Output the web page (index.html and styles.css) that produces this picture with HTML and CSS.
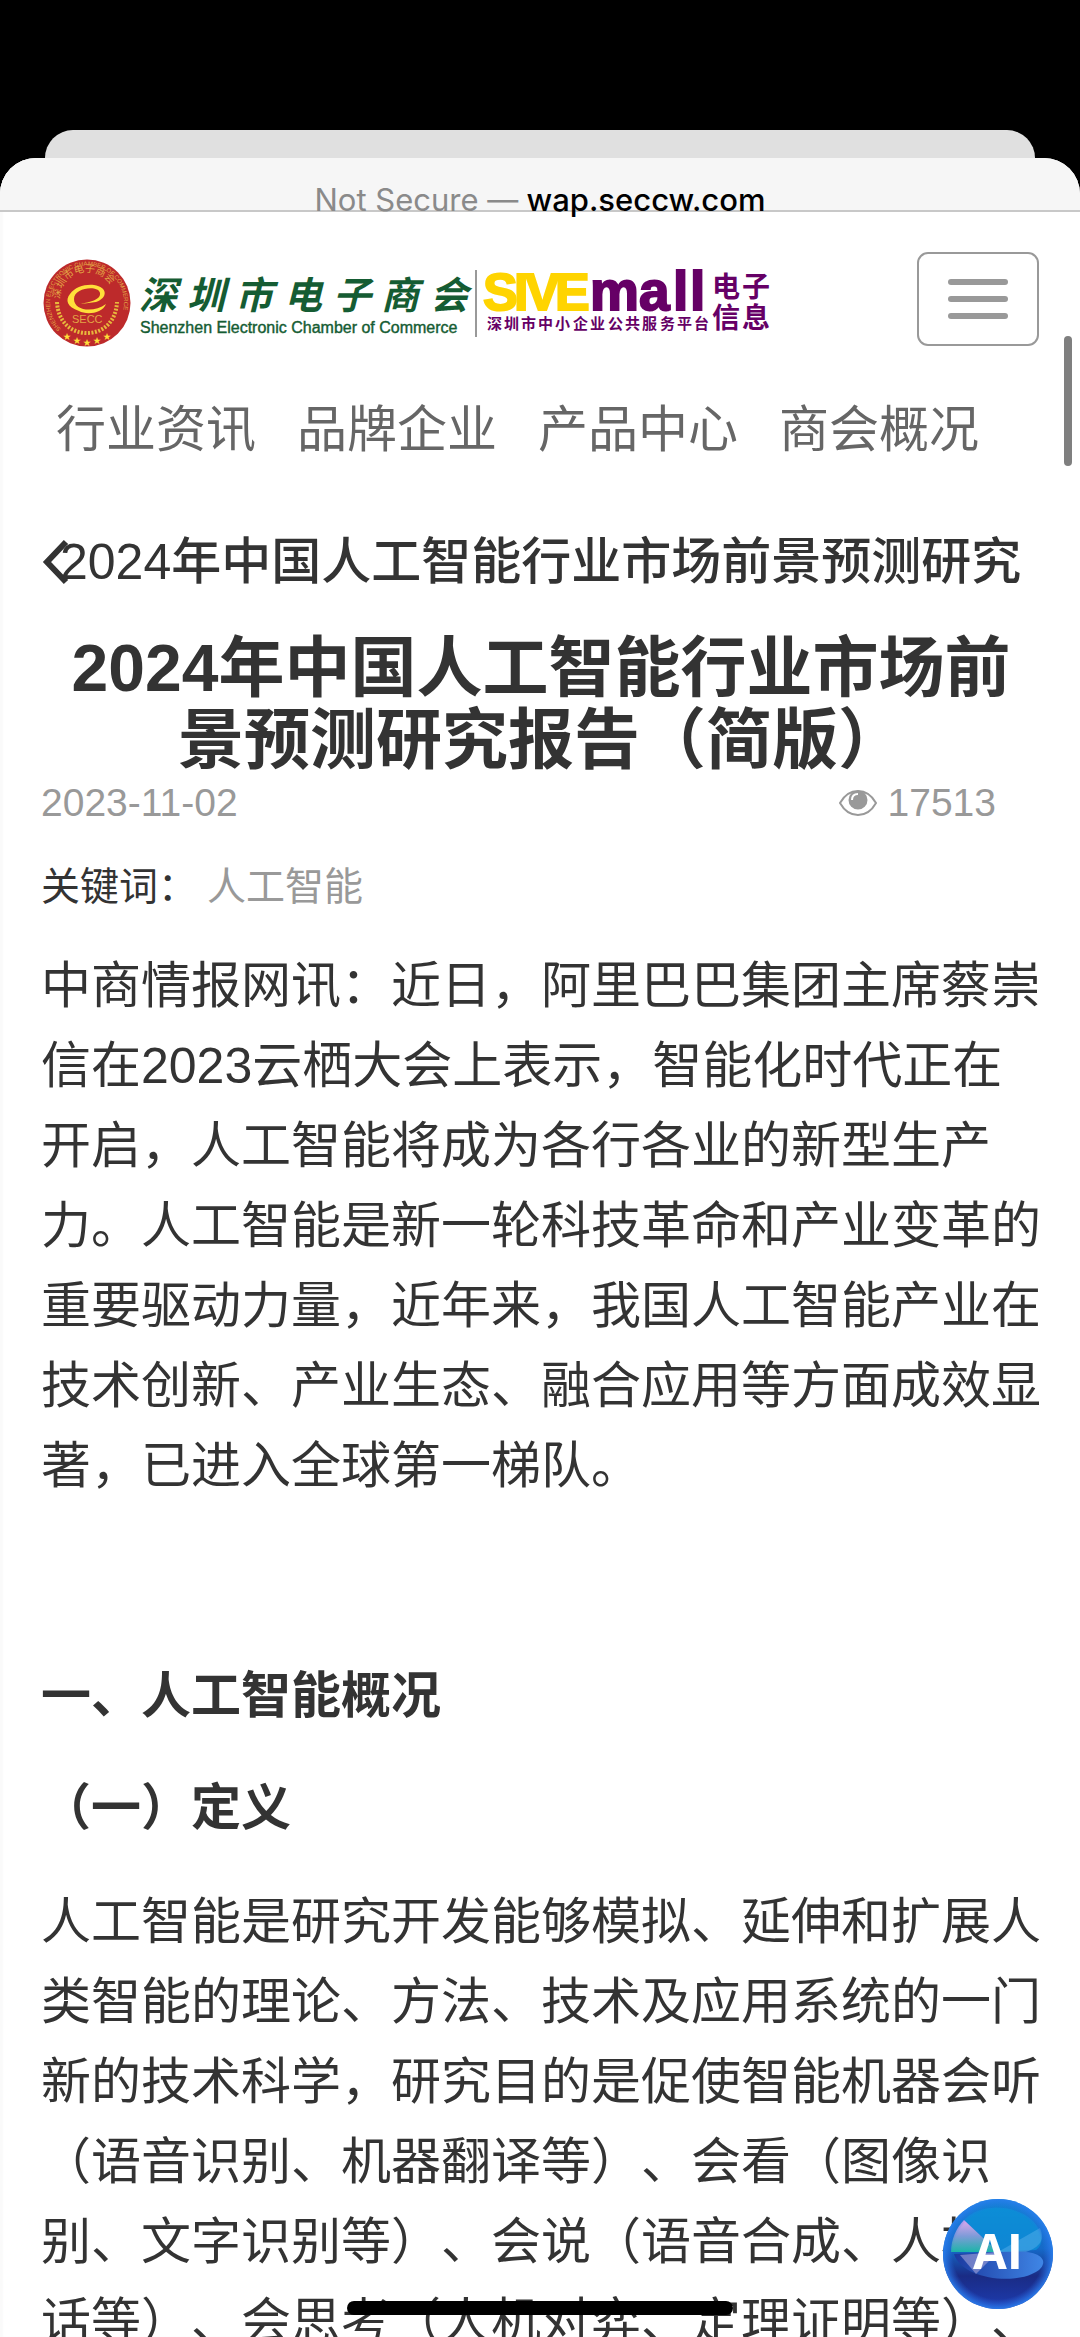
FILE: index.html
```html
<!DOCTYPE html>
<html lang="zh-CN">
<head>
    <meta charset="UTF-8">
    <meta name="viewport" content="width=device-width, initial-scale=1.0">
    <title>2024年中国人工智能行业市场前景预测研究报告（简版）</title>

    <link rel="stylesheet" href="styles.css">
</head>
<body>

    <div class="back-sheet"></div>

    <div class="sheet">
        <div class="address"><span class="insecure">Not Secure —</span> wap.seccw.com</div>

        <header class="header">
            <a class="logo" href="#" aria-label="深圳市电子商会">
                <svg width="732" height="94" viewBox="0 0 732 94">
                    <!-- seal -->
                    <defs>
                        <path id="ring" d="M20 73A37 37 0 1 1 72 73"/>
                        <path id="ring-cn" d="M19 43A27 27 0 0 1 73 43"/>
                    </defs>
                    <circle cx="46" cy="47" r="43.500" fill="#bd2a2b"/>
                    <g fill="#e3a545">
                        <text class="seal-en"><textPath href="#ring">SHENZHEN ELECTRONIC CHAMBER OF COMMERCE</textPath></text>
                        <text class="seal-cn"><textPath href="#ring-cn">深圳市电子商会</textPath></text>
                        <text class="seal-secc" x="31" y="67">SECC</text>
                    </g>
                    <path d="M16 46c1 20 14 31 30 31s29-11 30-31" fill="none" stroke="#e8b83c" stroke-width="4" stroke-dasharray="2 1.500"/>
                    <path d="M29 38C34 31 44 28 53 29c14 2 14 13 2 17l-15 2c8-2 20-4 19-11-1-8-26-6-26 6 0 12 20 14 32 5-4 10-20 11-27 7C26 51 24 44 29 38z" fill="#ffdf3a"/>
                    <g class="stars">
                        <text x="22" y="83">★</text>
                        <text x="32" y="87">★</text>
                        <text x="42" y="89">★</text>
                        <text x="52" y="87">★</text>
                        <text x="62" y="83">★</text>
                    </g>

                    <!-- chamber name -->
                    <g fill="#155c33">
                        <text class="name-cn" x="98 146 194 243 292 340 389" y="53">深圳市电子商会</text>
                        <text class="name-en" x="99" y="77">Shenzhen Electronic Chamber of Commerce</text>
                    </g>
                    <rect x="434" y="14" width="2" height="67" fill="#999"/>

                    <!-- SIVEmall -->
                    <text class="sive" x="442 473 484 514" y="54">SIVE</text>
                    <g fill="#660066">
                        <text class="mall" x="549 598 632 649" y="54">mall</text>
                        <text class="mall-sub" x="446 463 480 497 514 532 549 567 584 601 619 636 653" y="73">深圳市中小企业公共服务平台</text>
                        <text class="mall-side" x="671 701" y="41">电子</text>
                        <text class="mall-side" x="671 701" y="72">信息</text>
                    </g>
                </svg>
            </a>
            <button class="menu" type="button" aria-label="菜单">
                <span class="bar"></span>
                <span class="bar"></span>
                <span class="bar"></span>
            </button>
        </header>

        <nav class="nav">
            <a href="#">行业资讯</a>
            <a href="#">品牌企业</a>
            <a href="#">产品中心</a>
            <a href="#">商会概况</a>
        </nav>

        <div class="crumb">
            <a class="back" href="#" aria-label="返回">
                <svg width="28" height="46" viewBox="0 0 28 46">
                    <path d="M25 3L6 23L25 43" fill="none" stroke="#333" stroke-width="6"/>
                </svg>
            </a>
            <span>2024年中国人工智能行业市场前景预测研究</span>
        </div>

        <article class="article">
            <h1>2024年中国人工智能行业市场前景预测研究报告（简版）</h1>
            <div class="meta">
                <span>2023-11-02</span>
                <span class="views">
                    <svg width="40" height="28" viewBox="0 0 40 28">
                        <path d="M2 14C11-2 29-2 38 14C29 30 11 30 2 14z" fill="none" stroke="#999" stroke-width="2"/>
                        <circle cx="20" cy="11" r="9.500" fill="#999"/>
                        <path d="M14 11c0-4 2-6 6-6" fill="none" stroke="#fff" stroke-width="2"/>
                    </svg>
                    17513
                </span>
            </div>
            <div class="keywords">关键词：<a href="#">人工智能</a></div>

            <p>中商情报网讯：近日，阿里巴巴集团主席蔡崇信在2023云栖大会上表示，智能化时代正在开启，人工智能将成为各行各业的新型生产力。人工智能是新一轮科技革命和产业变革的重要驱动力量，近年来，我国人工智能产业在技术创新、产业生态、融合应用等方面成效显著，已进入全球第一梯队。</p>

            <h2>一、人工智能概况</h2>
            <h3>（一）定义</h3>
            <p>人工智能是研究开发能够模拟、延伸和扩展人类智能的理论、方法、技术及应用系统的一门新的技术科学，研究目的是促使智能机器会听（语音识别、机器翻译等）、会看（图像识别、文字识别等）、会说（语音合成、人机对话等）、会思考（人机对弈、定理证明等）、</p>
        </article>
    </div>

    <div class="scrollbar"></div>

    <button class="ai" type="button" aria-label="AI">
        <svg width="112" height="112" viewBox="0 0 112 112">
            <defs>
                <linearGradient id="orb" x1="0" y1="0" x2="0" y2="1">
                    <stop offset="0" stop-color="#0f86d2"/>
                    <stop offset="0.450" stop-color="#1569c8"/>
                    <stop offset="0.700" stop-color="#1a2b85"/>
                    <stop offset="1" stop-color="#1d3cb0"/>
                </linearGradient>
                <radialGradient id="rim">
                    <stop offset="0.820" stop-color="#2a6fe8" stop-opacity="0"/>
                    <stop offset="1" stop-color="#2a7fee" stop-opacity="0.900"/>
                </radialGradient>
                <linearGradient id="fan" x1="0" y1="0" x2="0" y2="1">
                    <stop offset="0" stop-color="#e0a8ee"/>
                    <stop offset="0.500" stop-color="#7f9bd8"/>
                    <stop offset="1" stop-color="#1bb5a8"/>
                </linearGradient>
                <linearGradient id="wave" x1="0" y1="0" x2="1" y2="0">
                    <stop offset="0" stop-color="#1c3aa0"/>
                    <stop offset="1" stop-color="#3f86e6"/>
                </linearGradient>
            </defs>
            <circle cx="56" cy="56" r="55" fill="url(#orb)"/>
            <path d="M22 22C38 5 72 6 90 22C102 34 102 46 94 52L56 54z" fill="#0c93d8" opacity="0.700"/>
            <path d="M22 22L56 54L9 54C9 42 14 30 22 22z" fill="url(#fan)"/>
            <path d="M12 56C20 82 76 88 97 72C107 63 98 55 84 54L56 54z" fill="url(#wave)"/>
            <path d="M18 57L56 54L34 76z" fill="#a5a3d8" opacity="0.600"/>
            <path d="M56 54L98 30C103 42 98 49 84 54z" fill="#6abaf0" opacity="0.400"/>
            <circle cx="56" cy="56" r="55" fill="url(#rim)"/>
            <text x="56" y="71" text-anchor="middle">AI</text>
        </svg>
    </button>

    <div class="home-indicator"></div>

</body>
</html>
```
FILE: styles.css
```css
* {
    box-sizing: border-box;
}
body {
    margin: 0;
    padding-top: 130px;
    height: 100vh;
    display: flex;
    flex-direction: column;
    overflow: hidden;
    background: #000;
    color: #333;
    font-family: "Liberation Sans", "Noto Sans CJK SC", sans-serif;
    font-size: 50px;
    line-height: 80px;
    text-spacing-trim: space-all;
}
a {
    color: inherit;
    text-decoration: none;
}
.back-sheet {
    flex: none;
    height: 28px;
    margin: 0 45px;
    border-radius: 28px 28px 0 0;
    background: #e0e0e0;
}
.sheet {
    flex: 1;
    min-height: 0;
    overflow: hidden;
    border-radius: 36px 36px 0 0;
    background: #fff;
    box-shadow: inset 3px 0 2px #fafafa;
}
.address {
    height: 54px;
    padding-top: 22px;
    border-bottom: 2px solid #c8c8c8;
    background: #f6f6f6;
    color: #000;
    font-family: Inter, sans-serif;
    font-size: 31px;
    font-weight: 500;
    line-height: 40px;
    text-align: center;
}
.insecure {
    color: #8a8a8a;
    font-weight: 400;
}

.header {
    display: flex;
    justify-content: space-between;
    align-items: flex-start;
    padding: 40px 41px 0 41px;
}
.logo {
    padding-top: 4px;
}
.logo svg {
    display: block;
}
.logo text {
    font-family: "Liberation Sans", "Noto Sans CJK SC", sans-serif;
}
.logo .seal-en {
    font-size: 6px;
}
.logo .seal-cn {
    font-size: 10px;
}
.logo .seal-secc {
    font-size: 11px;
}
.stars {
    fill: #ffdf3a;
    font-size: 8px;
}
.logo .name-cn {
    font-family: "Noto Sans CJK SC", sans-serif;
    font-size: 38px;
    font-weight: 700;
    font-style: italic;
}
.logo .name-en {
    font-size: 16px;
    stroke: #155c33;
    stroke-width: 0.4px;
}
.logo .sive {
    fill: #ffd400;
    stroke: #ffd400;
    stroke-width: 2px;
    font-size: 52px;
    font-weight: 700;
}
.logo .mall {
    stroke: #606;
    stroke-width: 2px;
    font-size: 55px;
    font-weight: 700;
}
.logo .mall-sub {
    font-size: 15px;
    font-weight: 700;
}
.logo .mall-side {
    font-size: 28px;
    font-weight: 700;
}
.menu {
    display: flex;
    flex-direction: column;
    justify-content: center;
    align-items: center;
    gap: 11px;
    width: 122px;
    height: 94px;
    padding: 0;
    border: 2px solid #999;
    border-radius: 11px;
    background: #fff;
}
.bar {
    width: 60px;
    height: 6px;
    border-radius: 3px;
    background: #999;
}

.nav {
    display: flex;
    gap: 41px;
    padding: 50px 56px 0;
    color: #666;
    line-height: 60px;
    white-space: nowrap;
}
.crumb {
    display: flex;
    position: relative;
    padding: 72px 0 0 60px;
    font-weight: 500;
    line-height: 60px;
    white-space: nowrap;
}
.back {
    position: absolute;
    left: 41px;
    bottom: 7px;
    display: flex;
}

.article {
    padding: 40px 39px 0 41px;
}
h1,
h2,
h3,
p {
    margin: 0;
}
h1 {
    font-size: 66px;
    line-height: 72px;
    text-align: center;
}
.meta {
    display: flex;
    justify-content: space-between;
    padding-right: 45px;
    color: #999;
    font-size: 39px;
    line-height: 54px;
}
.views {
    display: flex;
    align-items: center;
    gap: 10px;
}
.keywords {
    margin: 30px 0 32px;
    font-size: 39px;
    line-height: 54px;
}
.keywords a {
    margin-left: 10px;
    color: #999;
}
h2 {
    margin: 150px 0 32px;
    font-size: 50px;
}
h3 {
    margin-bottom: 34px;
    font-size: 50px;
}

.scrollbar {
    position: fixed;
    top: 336px;
    right: 8px;
    width: 8px;
    height: 130px;
    border-radius: 4px;
    background: #7f7f7f;
}
.ai {
    position: fixed;
    right: 26px;
    bottom: 27px;
    padding: 0;
    border: 0;
    border-radius: 50%;
    background: none;
}
.ai svg {
    display: block;
}
.ai text {
    fill: #fff;
    font-family: "Open Sans", sans-serif;
    font-size: 49px;
    font-weight: 700;
}
.home-indicator {
    position: fixed;
    left: 50%;
    bottom: 22px;
    width: 386px;
    height: 14px;
    margin-left: -193px;
    border-radius: 7px;
    background: #000;
}
```
